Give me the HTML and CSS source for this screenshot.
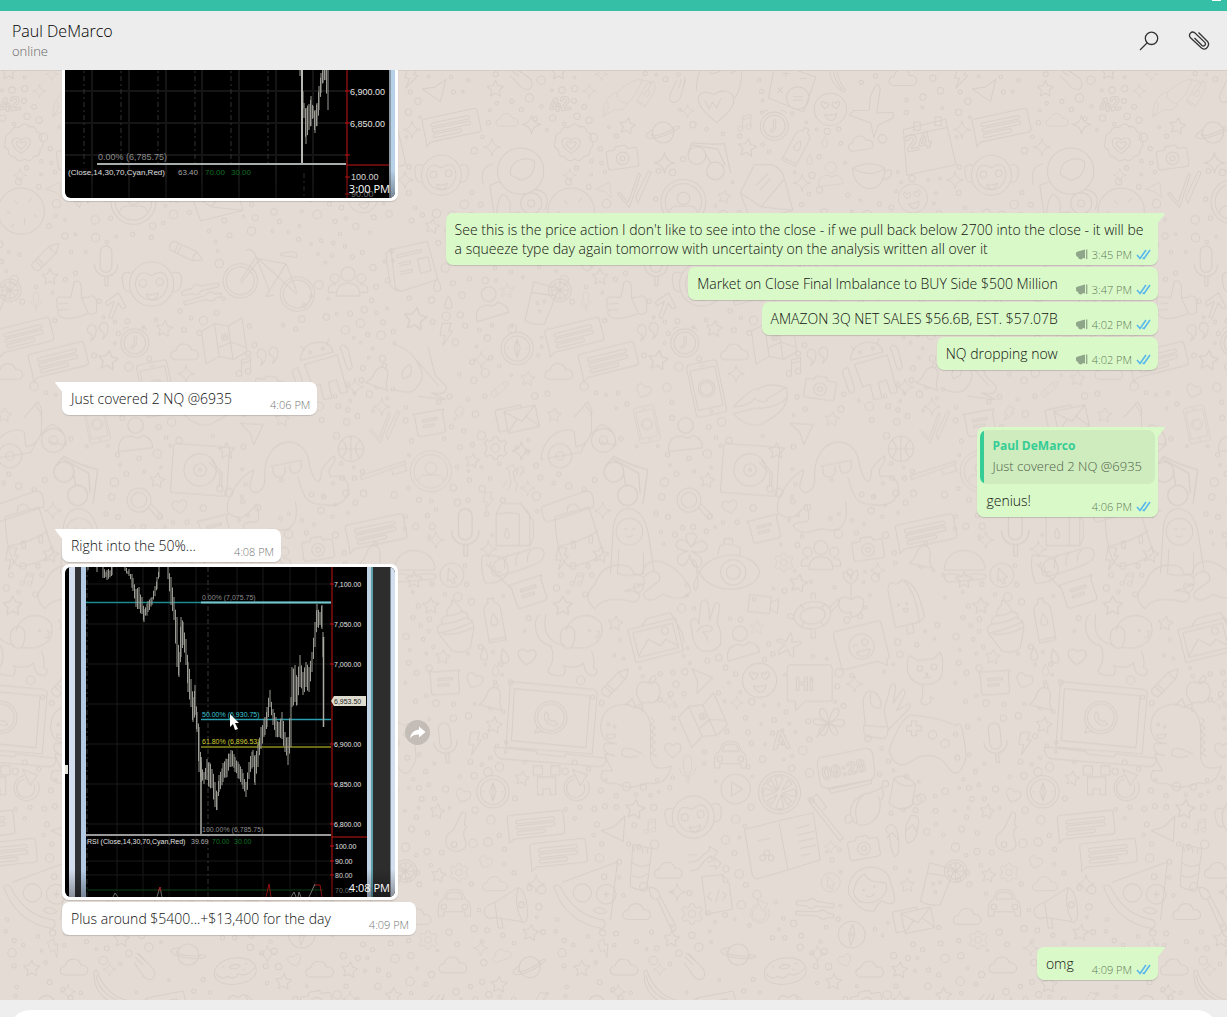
FILE: index.html
```html
<!DOCTYPE html>
<html lang="en">
<head>
  <meta charset="UTF-8">
  <title>Paul DeMarco</title>
  <link rel="stylesheet" href="styles.css">
</head>
<body>

<svg class="defs" aria-hidden="true">
  <symbol id="ticks" viewBox="0 0 15 11">
    <path d="M1 6l3 3.500L10 1M6.500 9L8 9.500L14 1" fill="none" stroke="#58b8ee" stroke-width="1.600"/>
  </symbol>
  <symbol id="megaphone" viewBox="0 0 12 11">
    <path d="M0 4Q0 2.500 2 2.500L9 0.500V9.500L7 9Q6 10.800 4 10.300Q2 9.800 2 8Q0 7.500 0 6Z" fill="#8fa68a"/>
    <path d="M10.700 0.500V10" stroke="#8fa68a" stroke-width="1.300"/>
  </symbol>
</svg>

<div class="app">
  <div class="titlebar"><button class="minimize" aria-label="Minimize"></button></div>

  <header class="header">
    <div>
      <h1>Paul DeMarco</h1>
      <p>online</p>
    </div>
    <div class="actions">
      <button aria-label="Search">
        <svg width="22" height="22" viewBox="0 0 22 22"><path d="M2 20L9.500 12.500" /><circle cx="13.500" cy="8.300" r="6.200"/></svg>
      </button>
      <button aria-label="Attach">
        <svg width="22" height="22" viewBox="0 0 22 22"><path d="M10.500 2.500L19.300 11.200C22.500 14.500 18.500 21.500 13.500 18L2.500 7.800C-0.200 4.500 3.500 0.200 7 3L16.800 12.400C18.600 14.600 16 17 14 15.500L6.500 8"/></svg>
      </button>
    </div>
  </header>

  <main class="chat">
    <svg class="wallpaper" id="wallpaper" aria-hidden="true"></svg>

    <div class="message in last">
      <div class="bubble photo">
        <svg viewBox="0 0 330 330" role="img" aria-label="Chart">
          <rect width="330" height="330" fill="#000"/>
          <path d="M27 0V330M64 0V330M101 0V330M137 0V330M174 0V330M211 0V330M248 0V330M0 223H281M0 255H281M0 287H281" stroke="#151515" stroke-width="2"/>
          <path d="M19 0V297M56 0V297M93 0V297M130 0V297M166 0V297M203 0V297M239 305V330" stroke="#333" stroke-dasharray="5 3 2 3"/>
          <path class="bars" id="bars-early"/>
          <path d="M237 190V296" stroke="#b9b9b4" stroke-width="2"/>
          <path d="M32 296H281" stroke="#a9adad" stroke-width="2"/>
          <path d="M282 0V330M282 297H325M280 223H285M280 255H285M280 287H285M280 309H285M280 326H285" stroke="#c41414" fill="none"/>
          <g class="label large">
            <text x="285" y="227">6,900.00</text>
            <text x="285" y="259">6,850.00</text>
            <text x="286" y="312">100.00</text>
            <text x="286" y="329" fill="#999">90.00</text>
            <text x="33" y="292" fill="#8c8c8c">0.00% (6,785.75)</text>
          </g>
          <g class="label medium">
            <text x="3" y="307">(Close,14,30,70,Cyan,Red)</text>
            <text x="113" y="307" fill="#aaa">63.40</text>
            <text x="140" y="307" fill="#0f7023">70.00</text>
            <text x="166" y="307" fill="#0f7023">30.00</text>
          </g>
          <rect x="324" width="2" height="330" fill="#8d99a3"/>
          <rect x="326" width="4" height="330" fill="#b7d1e9"/>
        </svg>
        <time>3:00 PM</time>
      </div>
    </div>

    <div class="message out tail">
      <p class="bubble">See this is the price action I don't like to see into the close - if we pull back below 2700 into the close - it will be a squeeze type day again tomorrow with uncertainty on the analysis written all over it <span class="meta"><svg class="megaphone"><use href="#megaphone"/></svg><time>3:45 PM</time><svg class="ticks"><use href="#ticks"/></svg></span></p>
    </div>
    <div class="message out">
      <p class="bubble">Market on Close Final Imbalance to BUY Side $500 Million <span class="meta"><svg class="megaphone"><use href="#megaphone"/></svg><time>3:47 PM</time><svg class="ticks"><use href="#ticks"/></svg></span></p>
    </div>
    <div class="message out">
      <p class="bubble">AMAZON 3Q NET SALES $56.6B, EST. $57.07B <span class="meta"><svg class="megaphone"><use href="#megaphone"/></svg><time>4:02 PM</time><svg class="ticks"><use href="#ticks"/></svg></span></p>
    </div>
    <div class="message out last">
      <p class="bubble">NQ dropping now <span class="meta"><svg class="megaphone"><use href="#megaphone"/></svg><time>4:02 PM</time><svg class="ticks"><use href="#ticks"/></svg></span></p>
    </div>

    <div class="message in tail last">
      <p class="bubble">Just covered 2 NQ @6935 <span class="meta"><time>4:06 PM</time></span></p>
    </div>

    <div class="message out tail last">
      <div class="bubble">
        <blockquote>
          <strong>Paul DeMarco</strong>
          <p>Just covered 2 NQ @6935</p>
        </blockquote>
        <p>genius! <span class="meta"><time>4:06 PM</time><svg class="ticks"><use href="#ticks"/></svg></span></p>
      </div>
    </div>

    <div class="message in tail">
      <p class="bubble">Right into the 50%... <span class="meta"><time>4:08 PM</time></span></p>
    </div>
    <div class="message in">
      <div class="bubble photo">
        <svg viewBox="0 0 330 330" role="img" aria-label="Chart">
          <rect width="330" height="330" fill="#000"/>
          <path d="M52 0V330M78 0V330M104 0V330M131 0V330M172 0V330M198 0V330M225 0V330M251 0V330M22 17H266M22 57H266M22 97H266M22 137H266M22 177H266M22 217H266M22 257H266M22 294H266M22 308H266" stroke="#1b1b1b"/>
          <path d="M22 0V330M143 0V330" stroke="#3a3a3a" stroke-dasharray="5 3 2 3"/>
          <path d="M21 35.500H266" stroke="#1b8d91" stroke-width="1.500"/>
          <path d="M136 152.500H266" stroke="#2b9fb0" stroke-width="1.500"/>
          <path d="M136 180H266" stroke="#8d8d1c" stroke-width="1.500"/>
          <path class="bars" id="bars-late"/>
          <path d="M136 190V267M258.500 70V160" stroke="#aaaaa2" stroke-width="1.500"/>
          <path d="M136 35.500H266" stroke="#79c5cd" stroke-width="2"/>
          <path d="M21 268H266" stroke="#999" stroke-width="2"/>
          <path d="M22 323H258" stroke="#0d5f1c"/>
          <path d="M48 330L50 326L53 330M92 330L95 320L97 330M226 330L229 325L231 330M233 330L234 325L236 330M244 330L250 317" stroke="#999" fill="none"/>
          <path d="M93 324L95 320L96 324M201 330L204 317L206 330M250 318H255L257 330" stroke="#c41414" fill="none"/>
          <path d="M267 0V330M267 270H302M265 17H269M265 57H269M265 97H269M265 177H269M265 217H269M265 257H269M265 279H269M265 294H269M265 308H269" stroke="#c41414" fill="none"/>
          <path d="M266 134L269 129H301V139H269Z" fill="#dddccf"/>
          <g class="label">
            <text x="269" y="20">7,100.00</text>
            <text x="269" y="60">7,050.00</text>
            <text x="269" y="100">7,000.00</text>
            <text x="269" y="137" fill="#222">6,953.50</text>
            <text x="269" y="180">6,900.00</text>
            <text x="269" y="220">6,850.00</text>
            <text x="269" y="260">6,800.00</text>
            <text x="270" y="282">100.00</text>
            <text x="270" y="297">90.00</text>
            <text x="270" y="311">80.00</text>
            <text x="270" y="326" fill="#999">70.00</text>
            <text x="137" y="33" fill="#8c8c8c">0.00% (7,075.75)</text>
            <text x="137" y="150" fill="#3cc8d5">50.00% (6,930.75)</text>
            <text x="137" y="177" fill="#cccc30">61.80% (6,896.53)</text>
            <text x="137" y="265" fill="#8c8c8c">100.00% (6,785.75)</text>
            <text x="22" y="277">RSI (Close,14,30,70,Cyan,Red)</text>
            <text x="126" y="277" fill="#aaa">39.69</text>
            <text x="147" y="277" fill="#0f7023">70.00</text>
            <text x="169" y="277" fill="#0f7023">30.00</text>
          </g>
          <path d="M165 147V160L168 157L170 163L173 162L170 156H174Z" fill="#fff"/>
          <rect x="4" width="6" height="330" fill="#d5deee"/>
          <rect x="10" width="6" height="330" fill="#303236"/>
          <rect x="16" width="5" height="330" fill="#b4cbe5"/>
          <rect y="198" width="3" height="9" fill="#e4e4da"/>
          <rect x="302" width="5" height="330" fill="#c1d3e6"/>
          <rect x="306" width="2" height="330" fill="#5f9fa8"/>
          <rect x="308" width="17" height="330" fill="#2d2d2d"/>
          <rect x="325" width="1" height="330" fill="#808b95"/>
          <rect x="326" width="4" height="330" fill="#d3deee"/>
        </svg>
        <time>4:08 PM</time>
      </div>
      <button class="forward" aria-label="Forward">
        <svg width="25" height="25" viewBox="0 0 25 25"><path d="M14 6.500L20.500 12L14 17.500V14.500Q8 14 5 18.500Q6 10.500 14 9.500Z" fill="#fff"/></svg>
      </button>
    </div>
    <div class="message in last">
      <p class="bubble">Plus around $5400...+$13,400 for the day <span class="meta"><time>4:09 PM</time></span></p>
    </div>

    <div class="message out tail">
      <p class="bubble">omg <span class="meta"><time>4:09 PM</time><svg class="ticks"><use href="#ticks"/></svg></span></p>
    </div>
  </main>

  <footer class="composer">
    <input type="text" aria-label="Message">
  </footer>
</div>

<script src="script.js"></script>
</body>
</html>
```

FILE: styles.css
```css
* {
  box-sizing: border-box;
  margin: 0;
  padding: 0;
}

body {
  font-family: 'Open Sans', 'Noto Sans', sans-serif;
  font-size: 14px;
  font-weight: 300;
  line-height: 19px;
  color: #111;
  height: 100vh;
  overflow: hidden;
}

button {
  border: none;
  background: none;
  cursor: pointer;
}

.defs {
  display: none;
}

/* the composer runs past the bottom of the window */
.app {
  display: flex;
  flex-direction: column;
  height: calc(100vh + 43px);
}

.titlebar {
  display: flex;
  justify-content: flex-end;
  align-items: flex-start;
  flex: none;
  height: 11px;
  padding-right: 6px;
  background: #34bfa6;
}

.minimize {
  width: 9px;
  height: 1px;
  background: #fff;
}

.header {
  display: flex;
  justify-content: space-between;
  align-items: center;
  flex: none;
  height: 59px;
  padding: 0 17px 0 12px;
  background: #ededed;
}

.header h1 {
  font-size: 16px;
  font-weight: 300;
  line-height: 20px;
  color: #000;
}

.header p {
  font-size: 13px;
  line-height: 20px;
  color: #666;
}

.actions {
  display: flex;
  gap: 28px;
}

.actions button,
.actions svg {
  display: block;
}

.actions svg {
  fill: none;
  stroke: #333;
  stroke-width: 1.3px;
}

/* messages */

.chat {
  position: relative;
  display: flex;
  flex-direction: column;
  justify-content: flex-end;
  flex: 1;
  min-height: 0;
  padding: 0 69px 20px 62px;
  overflow: hidden;
  background: #e4dbd5;
  box-shadow: inset 0 1px 0 #d4ccc6;
}

.wallpaper {
  position: absolute;
  top: 0;
  left: 0;
  width: 100%;
  height: 100%;
}

.message {
  position: relative;
  display: flex;
  align-items: center;
  gap: 7px;
  flex: none;
  margin-bottom: 2px;
}

.message.last {
  margin-bottom: 12px;
}

.message:last-child {
  margin-bottom: 0;
}

.message.out {
  justify-content: flex-end;
}

.bubble {
  position: relative;
  max-width: 65%;
  padding: 7px 7px 7px 9px;
  border-radius: 7px;
  background: #fff;
  box-shadow: 0 1px 1px rgba(0, 0, 0, 0.15);
}

.out .bubble {
  background: #daf9c8;
}

.tail.out .bubble {
  border-top-right-radius: 0;
}

.tail.in .bubble {
  border-top-left-radius: 0;
}

.tail .bubble::after {
  content: '';
  position: absolute;
  top: 0;
  width: 8px;
  height: 11px;
  background: inherit;
}

.tail.out .bubble::after {
  left: calc(100% - 1px);
  clip-path: polygon(0 0, 100% 0, 90% 15%, 0 100%);
}

.tail.in .bubble::after {
  right: calc(100% - 1px);
  clip-path: polygon(0 0, 100% 0, 100% 100%, 10% 15%);
}

.meta {
  float: right;
  display: flex;
  align-items: center;
  gap: 4px;
  margin: 8px 0 -4px 18px;
  font-size: 11px;
  line-height: 15px;
  color: #5f7a5a;
}

.in .meta {
  margin-left: 38px;
  color: #777;
}

.ticks {
  width: 15px;
  height: 11px;
}

.megaphone {
  width: 12px;
  height: 11px;
}

.bubble blockquote {
  margin: -4px -4px 7px -6px;
  padding: 6px 13px 8px 12px;
  border-radius: 7px;
  background: linear-gradient(to right, #35cd96 4px, #ceecbd 4px);
  font-size: 13px;
  line-height: 20px;
  color: #52604c;
}

.bubble blockquote strong {
  display: block;
  font-size: 12px;
  font-weight: 700;
  color: #35cd96;
}

.bubble.photo {
  width: 336px;
  padding: 3px;
}

.photo svg {
  display: block;
  width: 100%;
  border-radius: 6px;
}

.photo::before {
  content: '';
  position: absolute;
  inset: auto 3px 3px;
  height: 28px;
  border-radius: 0 0 6px 6px;
  background: linear-gradient(transparent, rgba(0, 0, 0, 0.35));
}

.photo time {
  position: absolute;
  right: 8px;
  bottom: 5px;
  font-size: 11px;
  font-weight: 400;
  line-height: 15px;
  color: #fff;
}

.bars {
  fill: none;
  stroke: #9b9b93;
}

.label {
  font-family: 'Liberation Sans', sans-serif;
  font-size: 7px;
  font-weight: 400;
  fill: #e4e4e4;
}

.label.medium {
  font-size: 8px;
}

.label.large {
  font-size: 9px;
}

.forward {
  width: 25px;
  height: 25px;
  border-radius: 50%;
  background: #c4bdb7;
}

.forward svg {
  display: block;
}

.composer {
  flex: none;
  padding: 10px;
  background: #eee;
}

.composer input {
  display: block;
  width: 100%;
  height: 40px;
  padding: 0 20px;
  border: none;
  border-radius: 20px;
  background: #fff;
}
```

FILE: script.js
```js
// price bars: x, high, low
const early = [
  [235, 190, 208], [239, 235, 250], [241, 240, 276], [244, 236, 262], [246, 228, 258],
  [248, 238, 250], [250, 242, 265], [252, 235, 258], [254, 218, 242], [256, 205, 225],
  [258, 198, 215], [260, 195, 212], [263, 200, 242]
];

const late = [
  [23, 0, 3], [32, 0, 5], [38, 0, 11], [42, 3, 13], [47, 0, 8], [60, 0, 4], [64, 2, 9],
  [68, 11, 24], [71, 22, 40], [74, 20, 42], [77, 30, 47], [79, 42, 55], [83, 34, 45],
  [87, 30, 38], [92, 10, 22], [94, 0, 10], [103, 0, 12], [106, 10, 38], [109, 30, 53],
  [112, 50, 100], [114, 85, 110], [116, 50, 90], [118, 55, 78], [121, 72, 98],
  [123, 95, 125], [126, 112, 140], [128, 130, 155], [130, 118, 148], [132, 145, 165],
  [134, 160, 205], [136, 195, 215], [139, 205, 217], [142, 192, 213], [144, 195, 220],
  [147, 202, 221], [150, 215, 240], [152, 225, 243], [154, 208, 225], [158, 196, 215],
  [162, 192, 210], [166, 183, 200], [170, 190, 205], [174, 197, 212], [178, 206, 222],
  [181, 215, 230], [184, 195, 212], [188, 183, 200], [190, 188, 218], [193, 175, 200],
  [196, 160, 182], [200, 150, 168], [202, 140, 160], [205, 123, 140], [208, 142, 158],
  [211, 150, 170], [214, 155, 170], [217, 145, 172], [220, 165, 185], [223, 170, 198],
  [226, 130, 180], [227, 100, 140], [230, 98, 135], [232, 110, 138], [235, 88, 120],
  [238, 105, 128], [241, 95, 120], [244, 100, 125], [247, 85, 105], [250, 55, 80],
  [252, 37, 60], [255, 45, 58], [257, 38, 62], [258, 65, 90]
];

let seed = 7;
function random() {
  seed = (seed * 16807) % 2147483647;
  return seed / 2147483647;
}

function bars(points) {
  let d = '';
  for (let i = 0; i < points.length; i++) {
    const [x, high, low] = points[i];
    d += `M${x} ${high}V${low}`;
    const next = points[i + 1];
    if (next && next[0] - x > 1 && next[0] - x < 6) {
      for (let step = 1.5; step < next[0] - x; step += 1.5) {
        const t = step / (next[0] - x);
        const a = high + (next[1] - high) * t + random() * 5 - 2;
        const b = low + (next[2] - low) * t - random() * 5 + 2;
        d += `M${x + step} ${a.toFixed(1)}V${b.toFixed(1)}`;
      }
    }
  }
  return d;
}

document.getElementById('bars-early').setAttribute('d', bars(early));
document.getElementById('bars-late').setAttribute('d', bars(late));

// wallpaper doodles, each drawn round 0,0
function ring(r, x = 0, y = 0) {
  return `M${x - r} ${y}a${r} ${r} 0 1 0 ${2 * r} 0a${r} ${r} 0 1 0 ${-2 * r} 0`;
}

const faceEyes = 'M-20-6c-16-14 2-24 4-10c12-12 18 8-2 14zM20-6c16-14-2-24-4-10c-12-12-18 8 2 14z';
const shapes = {
  star: 'M0-24L7-10L23-7L11 4L14 20L0 12L-14 20L-11 4L-23-7L-7-10Z',
  spark: 'M0-27Q3-3 27 0Q3 3 0 27Q-3 3-27 0Q-3-3 0-27Z',
  heart: 'M0 22C-42-4-18-30 0-12C18-30 42-4 0 22Z',
  cloud: 'M-28 20C-48 18-42-6-26-6C-22-30 12-32 18-8C40-12 46 18 26 20Z',
  drop: 'M0-20C8-6 10 0 10 7A10 10 0 0 1-10 7C-10 0-8-6 0-20Z',
  bolt: 'M-10-30H16L8-8H20L-8 34L-2 5H-16Z',
  chat: 'M-70-34H72Q80-34 80-26V26Q80 34 72 34H-68L-82 44L-80 26V-26Q-80-34-70-34M-52-18H50a5 5 0 0 1 0 10H-52a5 5 0 0 1 0-10M-52-2H50a5 5 0 0 1 0 10H-52a5 5 0 0 1 0-10M-52 14H20a5 5 0 0 1 0 10H-52a5 5 0 0 1 0-10',
  note: 'M-44-34H46L40-24V24Q40 32 32 32H-32Q-40 32-40 24V-24ZM-20-14H22v6H-20ZM-20 2H12v6H-20Z',
  camera: 'M-38-22H-20L-16-32H14L18-22H38Q44-22 44-16V24Q44 32 36 32H-36Q-44 32-44 24V-16Q-44-22-38-22' + ring(18, 0, 4) + ring(7, 0, 4),
  gear: 'M-6-32H6L8-23L17-18L25-24L32-14L26-6L26 6L33 14L24 24L16 19L8 23L6 32H-6L-8 23L-17 19L-25 24L-32 14L-25 6V-6L-32-14L-24-24L-16-19L-8-23Z' + ring(12),
  planet: ring(30) + 'M-30-8C-70 16-40 24 0 10C44-4 66-28 28-14M-30 0C-44 16-20 10 0 3C24-6 40-16 29-7',
  mail: 'M-50-30H20V-22M-52-30V30H-30M-28-22H58V38H-28ZM-28-20L14 14L56-20M-28 36L2 6M58 36L28 4',
  face: ring(46) + faceEyes + 'M-16 14Q0 20 18 12Q14 34 0 32Q-14 28-16 14',
  music: 'M-8 18V-20L18-26V12M-8-10L18-16' + ring(8, -15, 19) + ring(8, 11, 13),
  compass: ring(46) + ring(36) + ring(12, -14, -57) + 'M0-26L9 0L0 26L-9 0ZM0-26V26M-30 0h6M24 0h6',
  dial: ring(38) + 'M0-30L9 0L0 30L-9 0Z' + ring(4),
  clock: ring(40) + ring(31) + 'M-2-20V2L-14 16M4-20V5L-8 19M-34-36A12 12 0 0 1-18-44M34-36A12 12 0 0 0 18-44',
  mic: 'M-15-38a15 15 0 0 1 30 0V0a15 15 0 0 1-30 0ZM-30-6C-30 36 30 36 30-6M-3 25V50H5V25',
  car: 'M-32-10L-22-34Q0-46 22-34L32-10Q48-6 46 30V36H30V24H-30V36H-46V30Q-48-6-32-10M-24-12L-18-28Q0-36 18-28L24-12Z' + ring(8, -30, 10) + ring(8, 30, 10),
  thumb: 'M-10-12L2-56Q20-64 22-40L20-10H40Q52-20 62-4V32Q50 44 38 36L10 44Q-30 52-44 40Q-54 28-46 22Q-56 12-48 4Q-56-12-42-16ZM-44 4h26M-46 22h28M20-10L38 36',
  laptop: 'M-110-112L120-90Q134-88 132-74L118 94L-128 74L-116-100Q-116-110-110-112M-104-92L112-72L100 76L-112 56ZM-162 74L-42 86L-40 94L40 102L42 94L158 106Q156 132 134 130L-140 108Q-160 104-162 74' + ring(46, 0, -10) + ring(38, 0, -10) + 'M-38 14L-46 34L-22 28M-14-26C-30-6 0 22 20 10L10-2Q2 6-8-8L-6-18Z',
  phone: 'M-34-76H34Q44-76 44-66V66Q44 76 34 76H-34Q-44 76-44 66V-66Q-44-76-34-76M-36-58H36V56H-36ZM-8-66H8' + ring(24) + ring(18) + ring(4, 0, 66),
  bell: 'M-34 24Q-20 10-20-8Q-16-34 0-34Q18-34 20-8Q20 10 34 24ZM-8 24Q0 38 8 24' + ring(6, 0, -40),
  pencil: 'M-46-14H26L50 0L26 14H-46Q-58 0-46-14M26-14Q18 0 26 14M-32-14V14M-22-14V14',
  bike: ring(49, -78, 0) + ring(40, -78, 0) + ring(49, 78, 60) + ring(40, 78, 60) + 'M-78 0L-24-62L76 60M-14-54L58-30L0 40L-24-62Q-30-88-50-84M-78 8L-14-54M58-30L78 56M44-56L90-44Q98-56 80-62H50ZM0 40l-12 14h24',
  map: 'M-60-34L-20-50L18-38L60-56V42L20 58L-20 44L-60 60ZM-20-50V44M18-38V58M-20 20L20 8L60 30' + ring(9, 4, -8) + ring(4, 4, -8),
  ball: ring(36) + 'M-36 0H36M0-36V36M-26-25Q0 0-26 25M26-25Q0 0 26 25',
  turntable: 'M-72-70H72Q80-70 80-62V62Q80 70 72 70H-72Q-80 70-80 62V-62Q-80-70-72-70' + ring(46) + ring(18) + ring(4) + 'M24-24L58 8V40M30-30L64 6V40' + ring(9, 60, 50),
  octopus: 'M-78 34C-78-80 42-90 50 6C64 60 82 72 84 20C100 0 96-4 122-20C130 6 94 10 110 40C180 20 180 130 100 120C30 120 34 90 16 40M-78 34C-70 90-124 100-120 60L-108 20C-160 40-210 140-170 150C-130 170-120 130-100 120C-80 200-120 150-140 180C-110 220-70 180-46 190C0 200 20 170 10 110M-62 10L30-8M-54 12Q-58 44-32 40Q-16 36-20 8M-6 4Q-8 34 14 28Q30 22 26-4' + ring(5, -30, 50) + ring(7, 56, 90) + ring(6, -140, 110) + ring(6, 90, 96),
  avatar: ring(64) + ring(52) + ring(18, 0, -10) + 'M-40 30Q-36 8-8 12H8Q36 8 40 30',
  user: ring(20, 0, -28) + 'M-44 40Q-46-2-10 0Q10 10 20-2Q46 8 44 30Z',
  group: ring(20, 0, -28) + ring(13, -38, -16) + ring(13, 38, -16) + 'M-34 34Q-34-2 0-2Q34-2 34 34ZM-36 24H-56Q-60 0-34 2M36 24H56Q60 0 34 2',
  donut: 'M-60 4C-60-50 60-50 60 4C60 50-60 50-60 4M-56 0Q-40 24-24 12Q-8 28 8 10Q30 24 56 0M-16-12Q0-24 16-12Q0 2-16-12M-36-14l8-4M30-18l8 4M22-2l6 4',
  banana: 'M-44-52L-36-54C-24-10 10 26 56 34Q64 40 52 44C0 52-50 10-44-52M-38-40C-34 0 0 32 50 40',
  pizza: 'M-92-26Q-76-36-70-20Q-30 58 52 70Q60 86 46 94Q-58 76-92-26M-68-38L90-96L70 70' + ring(26, -10, -8) + ring(28, 58, -4) + ring(8, 52, -54) + 'M50-4h18M58-14v20M20 40q20-14 40 6q-20 14-40-6',
  cupcake: 'M-50 20Q-60 0-40-6Q-46-26-26-30Q-30-48-14-60L-12-76Q20-50 14-42Q40-40 32-22Q54-18 50 10L40 62Q20 80-12 70ZM-50 20Q0 10 50-14M-38 22Q0 28 48 4M-40-6Q0-10 30-26M-26-30Q0-30 14-42',
  bottle: 'M-24-30Q-20-48-8-50V-62H8V-50Q22-46 24-30V62H-24ZM0-18Q20 14 0 16Q-20 14 0-18M-24 54H24',
  dog: 'M-86-66Q-104-64-98-20Q-90 14-56 22Q-40 60-64 92Q-60 110-20 106Q-10 90-20 78Q20 90 38 70Q40 110 70 106Q84 90 66 84Q70 60 60 36M-70-70Q-86 10-16 20M-12-20C-6-70 66-80 88-40Q98 0 62 20Q40 32 6 26M-16-30C-40-20-30 44 4 26Q24-20 0-32Q-10-36-16-30' + ring(3, 54, -22) + 'M74-22l10 4l-8 10M68-4q10 8 14-4',
  hands: 'M-124 70Q-164 36-124 0Q-104-60-44-54Q-20-54-14-30Q20-28 16 0L-40 20Q-10 16 4 32Q0 52-18 50Q-100 30-124 70M10-30Q20-76 70-62Q110-50 140 0Q164 26 120 40Q90 40 70 28Q40 50 30 44Q6 40 20 20L60-10Q64-36 40-36Q20-30 16-20M0 26C-26 6-10-8 0 2C10-8 26 6 0 26',
  picture: 'M-70-44H70V52H-70ZM-58-32H58V40H-58ZM-58 36L-20-4L10 22L28 8L56 32M-30-44L-10-62H60L78 0V30' + ring(10, 32, -16),
  submarine: 'M-86 0C-60-60 66-70 86 0C70 64-60 64-86 0M-86 0Q-116-40-104-36Q-90-30-94 0Q-86 36-96 52Q-112 40-86 0M-34-50L-28-76Q0-86 30-70L28-50M-16-80V-96H8V-82' + ring(36, 10, 0) + ring(20, 10, 0),
  peace: 'M-40 0Q-50-26-32-30Q-24-30-20-14L-14-76Q0-92 8-70L10-24L26-74Q42-80 38-56L32-16Q46 0 42 44Q20 72-16 60Q-40 40-40 0M-26 8Q-16-12 8-10Q26-4 14 6L-10 8Q6 20 4 34',
  video: 'M-42-24H20V24H-42ZM20-8L42-20V22L20 10' + ring(5, -28, -12),
  turtle: 'M-54 6C-50-50 50-56 52-8C50 46-40 54-54 6M-36 4C-34-28 34-34 36-6C34 28-24 34-36 4M-4-46V-64H8V-48M50-24L70-46Q82-48 74-34L54-12M-4 44V64H8V42M-52 0Q-74-14-70 6L-50 10M-36-34L-24-20M36-34L24-20M-34 34L-24 18M32 28L22 16',
  starfish: 'M0-34Q8-30 8-8L34-14Q38-4 14 6L20 32Q8 36 0 14L-24 32Q-32 24-10 2L-36-6Q-32-16-8-8Z',
  plant: 'M0 50Q-34 60-36 20Q-24-4 0 14Q20-2 36 14Q38 60 0 64ZM0 14V-32M-2-30Q-30-50-20-66Q0-60 0-42Q0-66 18-70Q26-44 0-30',
  popsicle: 'M-40 66L-42-36Q-44-60-26-62Q-14-50 0-64Q36-60 44 10L48 50L30 62ZM30 62Q36-20 8-60M-8 68V90H10V64M-24 0l8 4l-8 4M8 0l-8 4l8 4M-10 18h16q-4 14-10 8z',
  selfie: 'M-60-60H60Q70-60 70-50V44Q70 52 60 52V70L34 52H-60Q-70 52-70 44V-50Q-70-60-60-60' + ring(36) + ring(9, 12, -10) + 'M-24-4q8-12 14 0M-18 12H22Q16 30 0 28Q-16 26-18 12',
  cat: 'M-52 0Q-58-40-46-48L-24-34Q4-40 20-38L40-58Q50-40 46-10Q50 30 0 34Q-40 34-52 0M-10 34V70Q-24 90 0 92Q20 86 12 70L24 74' + ring(8, -18, -12) + ring(8, 22, -16) + 'M-2 2h8l-4 6zM-8 14q6 4 10-4q4 8 12 2',
  apple: 'M0-20Q-30-34-34 4Q-28 44 0 34Q28 42 34 4Q30-32 0-20Q14-50 22-38Q20-22 4-18',
  plane: 'M-24-36L30 0L-22 36L-14 2Z',
  hi: 'M-54-52H54Q64-52 64-42V44Q64 52 54 52H-14L-40 78V52H-54Q-64 52-64 44V-42Q-64-52-54-52',
  clover: 'M0 0Q-34-20-24-40Q-6-50 0 0Q10-50 28-40Q36-20 0 0Q44-20 46 0Q44 20 0 0Q34 20 24 34Q8 40 0 0Q-4 42-22 34Q-40 20 0 0Q-44 14-44-6Q-38-20 0 0L-36 40',
  okhand: 'M-50 50L-56-16Q-50-56-20-40Q6-10-10 4Q-40 6-34-40M4 10L24-64Q40-70 36-50L30-10L56-50Q70-50 60-30L40 10L76-10Q84-4 70 10L16 66ZM-54 52L16 58Q14 92 0 90L-44 84Q-56 80-54 52',
  gamepad: 'M-100 40Q-60-70-30-60Q60-50 90-30Q110-60 120 60Q100 130 70 90Q40 40-20 60Q-80 110-100 40M-50-30h14v-14h14v14h14v14h-14v14h-14v-14h-14z' + ring(12, 24, -4) + ring(12, 60, 20),
  dino: 'M-96-40C-96-110-20-116-6-100Q50-100 46-20V40Q50 90 106 68Q90 130 40 116Q-20 140-50 118Q-110 120-90 82H-62Q-76 60-82 42L-84 34Q-60 34-56 40Q-96 30-84 4H-50Q-90 4-96-40M-78-22h26q-4 18-26 10zM26 36Q-40 0-36 36Q-20 50 10 40M46-70l12 10l-12 10l14 10l-14 10l14 10l-14 10l14 10l-14 10l14 12l-12 10l16 10M-26-104L-6-124L2-102L22-110V-86' + ring(4, -74, -50) + ring(4, -56, -44),
  creeper: 'M-38-40h26v26h-26zM12-40h26v26h-26zM-26-8H26V42H10V26H-10V42H-26Z',
  redo: 'M-10-34A36 36 0 1 0 28-18M-8-24A26 26 0 1 0 18-10M-14-52L28-36L8-6Z',
  orange: ring(60) + ring(50) + 'M-4-8L-12-42Q0-52 10-42ZM4 8L12 42Q0 52-10 42ZM-8-2L-42-12Q-52 0-42 10ZM8 2L42 12Q52 0 42-10ZM-6-6L-36-24L-24-36ZM6 6L36 24L24 36ZM6-6L24-36L36-24ZM-6 6L-24 36L-36 24Z',
  play: ring(42) + 'M-12-20L20 0L-12 20Z',
  monkey: ring(60) + 'M0-22Q40-50 44 0Q34 44 0 44Q-40 40-44 0Q-40-46 0-22M-56-30Q-86-40-78 0Q-76 24-58 20M56-30Q86-40 80 0Q76 24 58 20M-14 26Q0 34 18 24Q14 44 0 42Q-14 40-14 26' + ring(10, -24, -2) + ring(10, 22, -6),
  key: 'M-6-8L16-56Q32-58 26-40L24-20L30-14L22-4V14Q40 50 4 56Q-40 50-26 10Z' + ring(8, -6, 36),
  croissant: 'M-54 40Q-60 20-40 18Q-44-20 0-40Q36-46 50-60Q60-30 44-20Q50 20 20 40Q-10 60-34 36Q-46 50-54 40M-40 18L-30 36M0-40Q-36-10-20 44M38-34L46-20',
  mug: 'M-30-40Q0-60 32-22L22 36Q-10 60-44 30ZM-30-40Q-10-10 32-22' + ring(13, 36, 22),
  flops: 'M-36-20Q-60-40-30-50Q-10-40-10 10Q-8 40-22 42Q-36 20-36-20M-44-10L-28-26L-8 0M24-74Q54-80 44-40Q40 0 16 4Q4-10 12-50ZM10-30L30-48L42-26',
  book: 'M-106-66L0-94L90-114L110 20L14 50L-70 74Q-82 70-84 60ZM-8-86L18 46M-70-34l40-8M40-70l40-10M44-50l50-12M48-32l46-10M52-12l46-10M54 8l30-6' + ring(8, -42, 0) + ring(8, -30, 14) + ring(8, -54, 14),
  brush: 'M-38-60Q-10-60-6-34L38 50Q42 70 26 62L-14-26Q-34-20-38-60M-6-34L-16-26',
  toothbrush: 'M-50-56L-42-62L52 54L42 62ZM-36-60L-24-72L4-34L-8-26',
  girl: 'M-60 10C-64-80 54-84 60-20Q80 30 66 40Q50 44 36 32Q20 44 14 62Q-30 66-60 10M-46 10Q-40-30-14-44Q0-16 46-20Q60 10 20 34Q-30 50-46 10M-10 18Q6 26 16 10' + ring(2, -16, 2) + ring(2, 14, -8),
  fan: 'M-62 16Q-66-2-30-14L36-56Q60-40 62 20Q60 50 44 42L-30 30Q-56 40-62 16M-32-14L-22 60H-8L-14 30M36-56Q20-10 46 40' + ring(8, 44, -6),
  lollytube: 'M-20-62L34-50L20 60Q0 76-28 56ZM-18-56l2 14M-6-56l0 14M8-52l0 14M22-50l0 14M-22-10Q4 10 30-8M-24 26Q0 40 22 20',
  file: 'M-44-50L16-56L34-34L44 44L-30 56ZM16-56L18-34H34M-18-6L-28 8L-14 18M14-8L26 2L16 16M6-14L-4 24',
  sliders: 'M-54-14Q-40-18-24-14Q-10-30 4-14L54-6Q56 2 50 4L0 0Q-12 12-24 0L-54-4ZM-56 14L8 16Q24 4 36 20L54 24L50 34L36 32Q20 44 8 28L-56 24Z',
  lips: 'M-80 20Q-20-40-8-30Q14-50 70-36Q90 20 20 58Q-20 90-70 50L-80 40M-80 20Q-30 16-20-4Q10 16 20-4Q50-20 70-36M-80 40Q-10 20 0 24Q50 20 74-6',
  scooter: 'M-104 70Q-100 20-60-6Q-30-20-10-10L-4 34Q30 30 40-10V-60L20-90M-104 70L10 50Q40-14 70-30Q110-16 110 30L60 20M-10-50L30-94Q50-60 34-54' + ring(34, -50, 60) + ring(34, 74, 16) + ring(12, 74, 16) + ring(12, -50, 60),
  backpack: 'M-78-60L50-96Q74-100 70-50L-60-16Q-80-16-78-60M-42-30L56-50L88 84Q60 108-10 116Q-46 100-42-30M-40 56Q20 50 78 20M-6-42Q-6-66 20-60L30-44M0 44h10v20H0zM50 32h10v20H50z',
  astro: ring(66) + 'M-30 10C-30-36 20-44 40-26Q40 20 0 26ZM-60 30L-88 40L-74 136M40 52Q90 60 70 110M-80-20Q-120-10-106 40M-70 130Q-60 30-30 90V120L0 116' + ring(30, 30, 92) + ring(10, 30, 92),
  smileperson: ring(38) + 'M-54 120L-46-10Q-40-66 0-66Q46-60 56 20L70 110M-30 50L-34 120Q0 130 40 120V60M-16-6q6-6 10 0M8-6q6-6 10 0M-10 12q10 8 20-2',
  heartbadge: 'M0-54q14-10 22 4q20-4 22 14q20 6 12 24q14 14-2 26q2 20-18 20q-10 20-26 8q-20 12-28-6q-20 0-18-20q-20-10-8-26q-6-18 14-24q4-18 22-14zM0 26C-48-6-18-30 0-12C18-30 48-6 0 26M0 14C-26-4-10-14 0-4C10-14 26-4 0 14',
  flame: 'M-12 90C-100 20-60-10-20 10C20-20 60 20 20 60ZM-70 0Q-70-60-40-80L-30-50Q10-50 20-90Q40-60 30-50L60-70Q60-10 40 20M-46 26l12 26l10-20l12 16l12-28',
  glasses: ring(22, -38, -14) + ring(22, 8, 24) + 'M-60-20L-50-46Q-10-40 30-44L46 30M-18-20L-4 4M-50-40L14-30L32 10',
  calendar: 'M-60-40L60-70L90 60L-50 90ZM-60-20L64-46M-30-62h18v24h-18zM30-76h18v24h-18z',
  openmail: 'M-70 10L-30-70L20-70Q50-60 56-30L80 60L-40 90ZM-70 10L-10 50L56-30M-10 50L80 60M-26-10L10-46M-14 2L16-30',
  cup: 'M-50-20Q0-46 42-20Q40 40-6 38Q-46 30-50-20M-50-20Q0 10 42-20M42-10Q66-24 60 0Q50 14 36 10',
  lion: ring(66) + 'M-40 0l10 8M-20-30l10 10M20-24l10-12M10 20v20M-20 36l-8 10M36 10l10 6',
  rocket: 'M-60 90L-54 40Q-30-10 0-10Q70-70 100-60Q80 0 40 36Q30 70-10 60ZM-60 90Q-30 60-40 30M0-10Q-10 30 40 36M100-60L140-50Q130-20 100 0',
  airplane: 'M-10-30Q0-90 14-60L16 10L60 0L66 14L26 44L20 80L4 40L-60 30L-50 14L-6 6Z',
  quotes: 'M-26-20a13 13 0 0 1 22 8Q-4 14-20 22Q-10 8-20 2Q-36-4-26-20M8-26a13 13 0 0 1 22 8Q30 8 14 16Q24 2 14-4Q-2-10 8-26',
  arrow: 'M0-40L30-6Q28 2 20 0L6-12L0 36L-10 34L-6-14L-24 4Q-30 0-28-8Z',
  shuffle: 'M-46 10Q-20 14 0-12L16-22V-34L40-20L24 2L20-8Q-6 10-14 30L-40 36M-46-10H-20M10 10L32 6V-2L50 14L34 30V20L14 22',
  check: 'M-46 10L-22 40L8-44L14-40L-18 54L-52 14ZM0 24L36-50L44-46L6 42Z',
  drink: 'M-20-60L50-40L10 60Q-20 64-46 50ZM-26-30L40-20' + ring(4, -10, 0) + ring(4, 10, -4) + ring(4, -4, 24) + ring(32, 54, -36) + ring(24, 54, -36) + 'M30-36h48M54-60v48M38-52l32 32M70-52l-32 32',
  android: 'M-50-10Q-40-54 0-54Q40-54 46-20ZM-44-50l10 14M40-60l-10 18M-40 4L56-10L70 100H50L44 60L20 64L24 110H0L-4 66L-26 70ZM-60 10Q-80 10-76 30L-66 80Q-50 90-50 70ZM70-20Q60-30 76-36Q90-30 90-10L94 30Q84 44 78 30Z' + ring(4, -20, -28) + ring(4, 18, -34),
  calculator: 'M-50-60L66-20L30 80L-70 40ZM-30-30h20M-20-40v20M20-16h20M-44 10l16 16M-28 8l-16 18' + ring(32, 14, 40) + 'M0 36h28M0 46h28',
  guitar: 'M-90-60Q-40-40-30-20Q10 30-20 60Q-30 90-90 70M-30-20L40 60M-60 14Q-30-20-40 30L-60 40Q-70 30-60 14M10-50L30 30L60 60Q70 90 20 80L60 100L-20 90',
  bun: 'M-60 20C-50-50 40-40 54 10Q60 24 48 26H-50Q-64 26-60 20M-60 40Q-30 30-10 44Q20 30 58 40Q60 50 50 52L-50 60Q-64 50-60 40',
  milk: 'M-56-30L-40-60H14L40-30V60H-56ZM-56-30L-20-34L10-30V60M14-60L50-10V40L40 60M-26 10Q-10 34-24 40Q-38 34-26 10',
  bread: 'M-76 30Q-80 0-40-14L50-40Q80-40 70-10Q60 10-60 42Q-74 40-76 30M-40 20q-4-24 10-40M-6 12q-6-24 10-40M26 0q-4-20 10-32',
  flower: 'M0-12Q-30-50 0-52Q30-50 0-12Q34-44 46-16Q44 10 0 0Q44 20 24 44Q0 50-4 8Q-14 52-36 36Q-50 10-8 0Q-50-4-42-26Q-20-44 0-12',
  magnifier: ring(34) + ring(22) + 'M22 24L46 66Q60 62 54 50L30 14',
  clock2: 'M-72-34L60-60Q74-60 78-40L84 10Q84 26 70 30L-50 54Q-68 54-72 40L-80-10Q-80-32-72-34M-48 58L74 30V40L-40 68Z',
  leaf: 'M-36-54Q40-60 38-10Q30 24-26 26Q-42-10-36-54M-24-30L46 40M-14-20l2-16M0-6h20M0-6V-24',
  cursor: ring(34) + 'M-10-20L16 6L4 8L10 22L2 24L-4 12L-12 18Z',
  hotdog: 'M-34-36Q-20-40-12-28L26 0Q38 20 24 30Q6 34-10 12L-32-10M-32-26L-6-8M-26-36L0-18',
  newspaper: 'M-54-40L50-60L76 50L-30 80L-46 70ZM-54-40L-70-30L-60 60Q-54 76-30 80M-38-24l70-14v8l-70 14zM-34 0l34-6v8l-34 6M-30 24l34-6v8l-34 6M20-10l30-6l8 40l-30 6z'
};

// name, x, y, turn, size
const upper = [
  ['bolt', 30, 20, 10], ['plane', 105, 62, 70], ['star', 272, 54], ['hotdog', 345, 25], ['star', 452, 5],
  ['spark', 575, 12, 0, .7], ['rocket', 620, 70, 0, .7], ['spark', 540, 60, 0, .7], ['bottle', 705, 66, 30, .6], ['hotdog', 790, 60, 70, .9],
  ['flame', 915, 60], ['calculator', 1120, 40], ['banana', 1250, 0, 40, .9], ['cloud', 1435, 24], ['airplane', 1345, 110, 10],
  ['spark', 34, 170, 0, .9], ['chat', 147, 158, -12], ['cloud', 306, 144, 0, .8], ['spark', 375, 155], ['face', 1227, 112],
  ['heartbadge', 488, 212], ['star', 648, 160, 10], ['planet', 750, 178], ['spark', 820, 117, 0, .7], ['music', 984, 150, 0, .9], ['clock', 1067, 160],
  ['bottle', 1134, 216, 28, .9], ['calendar', 1495, 210], ['monkey', 118, 300, 0, .95], ['spark', 262, 220, 0, .9],
  ['astro', 344, 288], ['spark', 484, 300, 0, .7], ['camera', 634, 248, -8], ['spark', 754, 265, 0, 1.1], ['glasses', 890, 260, 0, 1.15],
  ['star', 990, 222, 8, 1.1], ['drop', 1211, 206, 0, .8], ['drop', 1168, 256, 0, .8], ['cloud', 1314, 210, -8, .9], ['cup', 1340, 300],
  ['openmail', 1040, 340], ['spark', 1146, 322, 0, .9], ['user', 1228, 300, 0, .8], ['face', 1462, 366, -10, .9],
  ['plane', 588, 338, -60, .7], ['check', 672, 338], ['avatar', 808, 376], ['star', 924, 362, 10, .8], ['lion', 488, 402],
  ['star', 92, 446, 10, .9], ['spark', 14, 314, 0, .9], ['newspaper', 30, 550, -2], ['drop', 106, 614], ['drop', 138, 664],
  ['user', 258, 668, -10, 1.05], ['starfish', 305, 628, 0, .6], ['drink', 402, 664], ['mic', 530, 660, 0, .5], ['thumb', 640, 660, -3], ['arrow', 756, 674, 14],
  ['star', 44, 710, 8, 1.4], ['bolt', 130, 752], ['compass', 334, 794], ['chat', 497, 756, -14], ['chat', 594, 826, -14, 1.02],
  ['quotes', 706, 750], ['clock', 812, 778], ['star', 896, 738, 8], ['cloud', 955, 806], ['monkey', 860, 610, 0, 1.05], ['pencil', 960, 520, 25], ['sliders', 1000, 630, -18],
  ['mic', 730, 560, 0, 1.1], ['pencil', 560, 530, -45], ['star', 570, 590], ['bike', 1190, 590, -8], ['group', 1420, 610], ['map', 1066, 770, -8], ['android', 1335, 830, -8],
  ['guitar', 70, 840], ['spark', 232, 826, 0, .9], ['cloud', 454, 862], ['star', 736, 828, 8, 1.2], ['star', 364, 880, 6, .9],
  ['pencil', 286, 908, -40, .6], ['heart', 694, 914, 20, .9], ['phone', 874, 908, -12], ['spark', 958, 866, 0, .9], ['music', 1124, 846], ['quotes', 1190, 820],
  ['lips', 1030, 940], ['camera', 1198, 906, 8], ['spark', 1440, 904, 0, .9], ['bell', 1510, 880, 20],
  ['note', 86, 1008, -10], ['bolt', 166, 980, 20, .7], ['mail', 330, 990, -12, 1.05], ['star', 440, 984, 6, .9], ['scooter', 506, 1040],
  ['phone', 704, 1010, -12, .68], ['user', 814, 1044, 0, 1.1], ['plane', 1152, 1026, -30], ['star', 1232, 996, 6, .9], ['spark', 1516, 960, 0, .9], ['check', 1528, 1016, 0, .9],
  ['gear', 272, 1078], ['spark', 346, 1086], ['avatar', 88, 1144, 0, .92], ['star', 206, 1114, 10, .9], ['star', 1074, 1086], ['ball', 1428, 1080],
  ['octopus', 1260, 1120], ['turntable', 998, 1140, 4], ['shuffle', 320, 1160, -60, .8], ['spark', 364, 1192, 0, .8], ['glasses', 650, 1180, 20, 1.3],
  ['star', 876, 1170, 8, .9], ['magnifier', 824, 1226, -10], ['heart', 940, 1244, -10, .9], ['bolt', 250, 1228, 0, .8], ['toothbrush', 1520, 1140, 110, .9],
  ['backpack', 486, 1300, -4], ['mic', 186, 1320, 0, 1.3], ['milk', 330, 1296], ['spark', 578, 1256, 0, .9], ['smileperson', 654, 1316],
  ['note', 1040, 1310, -14], ['chat', 1500, 1316, -12, 1.05], ['spark', 102, 1340, 0, .9], ['bun', 44, 1400], ['spark', 252, 1366, 0, .9],
  ['flower', 830, 1372], ['bread', 338, 1402]
];

const lower = [
  ['bolt', 460, 52], ['star', 572, 42, 8], ['group', 1200, 50], ['gear', 1094, 64, 0, .8], ['camera', 1334, 24, -8], ['bell', 1490, 50, 12],
  ['star', 40, 114], ['cursor', 148, 100], ['leaf', 270, 98], ['note', 368, 150, -18, 1.1], ['music', 506, 112, 14, .8], ['hands', 680, 126],
  ['submarine', 940, 92], ['star', 1136, 124, 10, 1.1], ['plant', 1286, 156], ['spark', 1362, 86, 0, .8], ['popsicle', 1440, 178, -10],
  ['star', 88, 188], ['cupcake', 160, 246], ['bottle', 268, 228, -10], ['star', 464, 188, 0, 1.2], ['dog', 486, 280], ['star', 614, 238, 8, .9],
  ['picture', 728, 282, -14], ['peace', 872, 254], ['user', 974, 296, -10, 1.05], ['starfish', 1018, 248, 0, .6], ['video', 1036, 184, 6], ['turtle', 1176, 216],
  ['selfie', 1316, 304, -14], ['starfish', 1108, 298, 8], ['star', 122, 334, 6, .9], ['drop', 240, 326], ['drop', 298, 332, -14, 1.1], ['heart', 362, 332, 4, 1.1],
  ['drop', 272, 372, 0, .9], ['note', 128, 408, -4], ['heart', 212, 400, 20], ['bell', 264, 454, 14], ['pencil', 616, 404, -46], ['apple', 708, 428],
  ['plane', 862, 398, -10], ['face', 1025, 400, 0, 1.06], ['hi', 1168, 408], ['spark', 1296, 410, 0, .9], ['cat', 1500, 378],
  ['laptop', 430, 516], ['dino', 668, 576], ['spark', 768, 462, 0, .7], ['spark', 960, 464, 0, .7], ['map', 862, 512, -24], ['clover', 1222, 522],
  ['okhand', 1376, 476], ['gamepad', 1494, 560], ['star', 268, 528, 8], ['mic', 130, 580, -6, 1.1], ['bolt', 212, 578], ['heart', 778, 598], ['mic', 820, 654, 0, .75],
  ['car', 942, 614], ['clock2', 1270, 654], ['orange', 1082, 720], ['play', 957, 710], ['star', 348, 680, 8, .9], ['creeper', 418, 684], ['redo', 506, 706],
  ['compass', 265, 718], ['heart', 180, 728, 20, .9], ['star', 106, 774, 10, .9], ['key', 160, 832], ['chat', 388, 812, -6], ['chat', 452, 892, -6], ['star', 670, 768, 8, 1.2],
  ['plane', 620, 830, 60, 1.1], ['music', 714, 816, 0, .8], ['monkey', 836, 790, -6], ['toothbrush', 1212, 796], ['croissant', 1324, 764], ['mug', 1438, 720],
  ['camera', 1322, 876, -10], ['flops', 1432, 860], ['spark', 1228, 874, 0, .7], ['book', 1088, 892], ['lollytube', 684, 930], ['cloud', 766, 944], ['shuffle', 866, 908],
  ['pizza', 530, 1014], ['star', 110, 956, 10, .9], ['gear', 168, 948, 0, .8], ['heart', 244, 918, 20, .8], ['cloud', 272, 982, 0, .9], ['spark', 388, 980, 0, .9],
  ['car', 155, 1036], ['fan', 302, 1046], ['cloud', 676, 1062], ['brush', 748, 1050], ['spark', 790, 1004, 0, .9], ['gear', 832, 1066, 0, .9], ['file', 904, 1010],
  ['redo', 1028, 1064, 0, .75], ['sliders', 1184, 1044], ['cursor', 1228, 976, 0, .8], ['girl', 1338, 996], ['star', 1446, 984, 0, .9], ['drink', 1530, 980],
  ['mail', 1460, 1080, -12], ['dial', 1288, 1125, 6], ['cloud', 50, 1076], ['gear', 80, 1140, 0, .8], ['star', 372, 1120, 8], ['spark', 230, 1164, 0, .8], ['star', 774, 1138, 4],
  ['bolt', 582, 1164, -30, .8], ['cloud', 290, 1184, -20, .7], ['cloud', 152, 1214], ['planet', 370, 1218, -6], ['star', 518, 1222], ['cloud', 640, 1220], ['spark', 740, 1224, 0, .7],
  ['hotdog', 840, 1220, 10], ['planet', 964, 1182, 26], ['donut', 1098, 1228, -8], ['spark', 1190, 1180, 0, .9], ['heart', 1268, 1198, -20, .8], ['cloud', 1340, 1226], ['star', 1424, 1226, 8],
  ['star', 282, 1268, 4], ['star', 1236, 1260, 4], ['banana', 740, 1280], ['spark', 622, 1288, 0, .8], ['cloud', 564, 1324], ['hotdog', 88, 1328, 90], ['star', 172, 1328, 6],
  ['bolt', 400, 1314, 20, .8], ['star', 1034, 1336, 6], ['camera', 1330, 1318, -10], ['spark', 1426, 1308, 0, .8], ['newspaper', 900, 1346], ['popsicle', 1120, 1360], ['plane', 330, 1350, 60, .9],
  ['face', 686, 1380], ['dial', 1408, 1386], ['cloud', 1484, 1376, 0, .7], ['star', 1550, 1300]
];

const words = [
  ['42', 428, 122, 56, -10], ['24', 1446, 234, 66, -12], ['Hi', 1126, 1768, 54, 0], ['09:28', 1206, 2024, 50, -12], ['A', 1062, 1938, 74, -6]
];

const unit = 1568 / 550;
const tileHeight = 2660;
const doodles = upper.concat(lower.map(([name, x, y, ...rest]) => [name, x, y + 1340, ...rest]));

let tile = '';
const taken = [];
for (const [name, x, y, turn = 0, size = 1] of doodles) {
  const d = shapes[name];
  for (const dx of [0, -1568, 1568]) {
    if (x + dx < -200 || x + dx > 1768) continue;
    tile += `<path d="${d}" transform="translate(${x + dx} ${y}) rotate(${turn}) scale(${size})"/>`;
  }
  const reach = Math.max(...d.match(/[A-Z]-?\d+/g).map(m => Math.abs(parseFloat(m.slice(1)))));
  taken.push([x, y, Math.min(reach, 120) * size]);
}
for (const [text, x, y, size, turn] of words) {
  tile += `<text font-size="${size}" transform="translate(${x} ${y}) rotate(${turn})">${text}</text>`;
}

// small bubbles fill the room that is left
for (let i = 0; i < 9000; i++) {
  const x = random() * 1540 + 14;
  const y = random() * 2640 + 10;
  const r = [4, 5, 6, 7, 9, 12][Math.floor(random() * 6)];
  if (taken.some(([tx, ty, tr]) => Math.hypot(tx - x, ty - y) < tr + r + 6)) continue;
  tile += `<path d="${ring(r, Math.round(x), Math.round(y))}"/>`;
  taken.push([x, y, r + 10]);
}

document.getElementById('wallpaper').innerHTML = `
  <defs>
    <pattern id="doodles" x="-150" width="550" height="${tileHeight / unit}" patternUnits="userSpaceOnUse">
      <g transform="scale(${1 / unit})" fill="none" stroke="#d8cfc8" stroke-width="3" stroke-linejoin="round"
        font-family="Liberation Sans" font-weight="bold">${tile}</g>
    </pattern>
  </defs>
  <rect width="100%" height="100%" fill="url(#doodles)"/>`;
```
